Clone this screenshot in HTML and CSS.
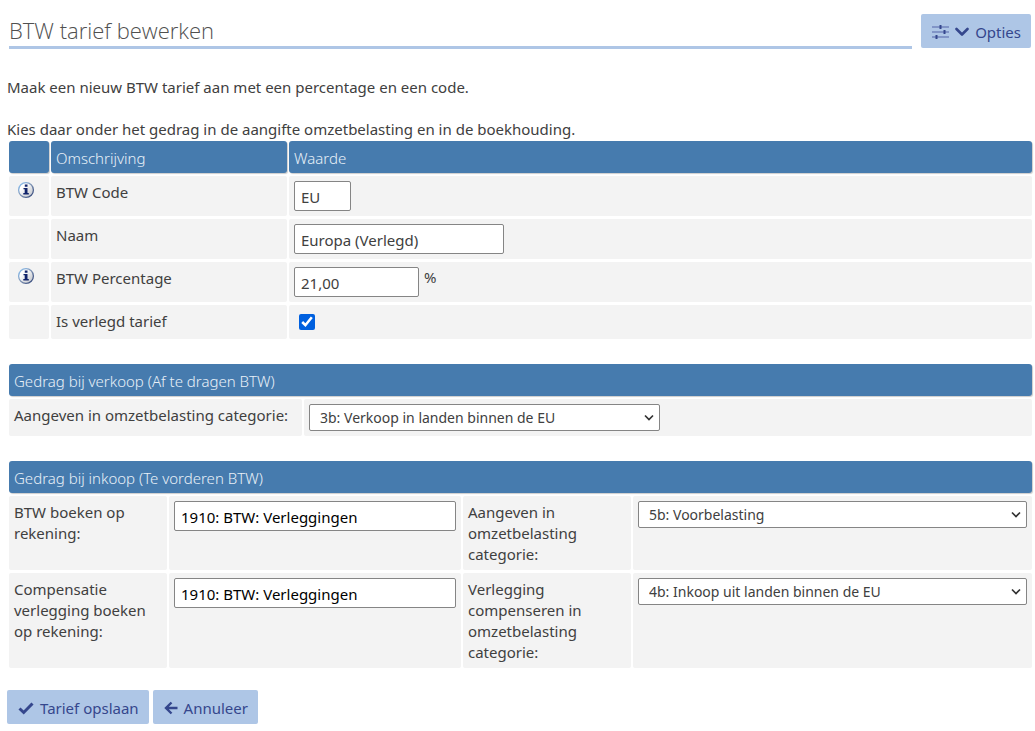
FILE: index.html
```html
<!DOCTYPE html>
<html lang="nl">
<head>
<meta charset="utf-8">
<meta name="viewport" content="width=device-width, initial-scale=1">
<title>BTW tarief bewerken</title>
<link rel="stylesheet" href="styles.css">
</head>
<body>
<header class="page-head">
  <h1 class="title">BTW tarief bewerken</h1>
  <button type="button" class="btn">
    <svg width="17" height="16" viewBox="0 0 17 16" aria-hidden="true">
      <path d="M0 3h17M0 8h17M0 13h17" stroke="#7385bd" stroke-width="1.600"/>
      <path d="M8.500 1v4M12.500 6v4M4.500 11v4" stroke="#35478d" stroke-width="2"/>
    </svg>
    <svg width="14" height="16" viewBox="0 0 14 16" aria-hidden="true">
      <path d="M1.500 5l5.500 5.500L12.500 5" fill="none" stroke="#35478d" stroke-width="2.600" stroke-linecap="round" stroke-linejoin="round"/>
    </svg>
    Opties
  </button>
</header>
<main>
  <p class="intro">Maak een nieuw BTW tarief aan met een percentage en een code.</p>
  <p class="intro">Kies daar onder het gedrag in de aangifte omzetbelasting en in de boekhouding.</p>
  <form>
    <table class="grid">
      <colgroup><col class="col-info"><col class="col-desc"><col></colgroup>
      <thead>
        <tr><th></th><th>Omschrijving</th><th>Waarde</th></tr>
      </thead>
      <tbody>
        <tr>
          <td class="info">
            <svg width="18" height="18" viewBox="0 0 18 18" role="img" aria-label="Info">
              <defs>
                <linearGradient id="rim" x1="0" y1="0" x2="1" y2="1"><stop offset="0" stop-color="#8cc4f5"/><stop offset=".5" stop-color="#8195b5"/><stop offset="1" stop-color="#263a70"/></linearGradient>
                <linearGradient id="face" x1="0" y1="0" x2="1" y2="1"><stop offset=".3" stop-color="#fff"/><stop offset="1" stop-color="#b9bdc4"/></linearGradient>
              </defs>
              <circle cx="9" cy="9" r="7.400" fill="url(#face)" stroke="url(#rim)" stroke-width="1.300"/>
              <path d="M7.800 3.500h2.700v2.200H7.800zM6.500 7h4v5h1.300v1.400H6.300V12h1.400V8.300H6.500z" fill="#12246b"/>
            </svg>
          </td>
          <td><label for="code">BTW Code</label></td>
          <td><input type="text" id="code" class="field w-code" value="EU"></td>
        </tr>
        <tr>
          <td></td>
          <td><label for="naam">Naam</label></td>
          <td><input type="text" id="naam" class="field w-name" value="Europa (Verlegd)"></td>
        </tr>
        <tr>
          <td class="info">
            <svg width="18" height="18" viewBox="0 0 18 18" role="img" aria-label="Info">
              <circle cx="9" cy="9" r="7.400" fill="url(#face)" stroke="url(#rim)" stroke-width="1.300"/>
              <path d="M7.800 3.500h2.700v2.200H7.800zM6.500 7h4v5h1.300v1.400H6.300V12h1.400V8.300H6.500z" fill="#12246b"/>
            </svg>
          </td>
          <td><label for="perc">BTW Percentage</label></td>
          <td><div class="with-unit"><input type="text" id="perc" class="field w-perc" value="21,00"><span>%</span></div></td>
        </tr>
        <tr>
          <td></td>
          <td><label for="verlegd">Is verlegd tarief</label></td>
          <td><input type="checkbox" id="verlegd" class="check" checked></td>
        </tr>
      </tbody>
    </table>

    <table class="grid">
      <colgroup><col class="col-sale"><col></colgroup>
      <thead><tr><th colspan="2">Gedrag bij verkoop (Af te dragen BTW)</th></tr></thead>
      <tbody>
        <tr>
          <td><label for="verkoop">Aangeven in omzetbelasting categorie:</label></td>
          <td><select id="verkoop" class="select w-sale"><option>3b: Verkoop in landen binnen de EU</option></select></td>
        </tr>
      </tbody>
    </table>

    <table class="grid">
      <colgroup><col class="col-label"><col class="col-account"><col class="col-label2"><col></colgroup>
      <thead><tr><th colspan="4">Gedrag bij inkoop (Te vorderen BTW)</th></tr></thead>
      <tbody>
        <tr>
          <td><label for="rek1">BTW boeken op rekening:</label></td>
          <td><input type="text" id="rek1" class="field account" value="1910: BTW: Verleggingen"></td>
          <td><label for="cat1">Aangeven in omzetbelasting categorie:</label></td>
          <td><select id="cat1" class="select"><option>5b: Voorbelasting</option></select></td>
        </tr>
        <tr>
          <td><label for="rek2">Compensatie verlegging boeken op rekening:</label></td>
          <td><input type="text" id="rek2" class="field account" value="1910: BTW: Verleggingen"></td>
          <td><label for="cat2">Verlegging compenseren in omzetbelasting categorie:</label></td>
          <td><select id="cat2" class="select"><option>4b: Inkoop uit landen binnen de EU</option></select></td>
        </tr>
      </tbody>
    </table>

    <div class="actions">
      <button type="button" class="btn">
        <svg width="16" height="16" viewBox="0 0 16 16" aria-hidden="true">
          <path d="M1.500 8.500l4.200 4L14.500 3.500" fill="none" stroke="#35478d" stroke-width="3"/>
        </svg>
        Tarief opslaan
      </button>
      <button type="button" class="btn">
        <svg width="14" height="16" viewBox="0 0 14 16" aria-hidden="true">
          <path d="M7.500 2.500L2 8l5.500 5.500M2 8h11.500" fill="none" stroke="#35478d" stroke-width="2.400"/>
        </svg>
        Annuleer
      </button>
    </div>
  </form>
</main>
</body>
</html>
```

FILE: styles.css
```css
* {
  box-sizing: border-box;
}

body {
  margin: 0;
  padding: 14px 1px 0 7px;
  background: #fff;
  color: #404040;
  font: 15px/21px "Noto Sans", "Open Sans", sans-serif;
}

.page-head {
  display: flex;
  align-items: flex-start;
  gap: 9px;
  padding: 0 3px 0 2px;
  margin-bottom: 28px;
}

.title {
  flex: 1;
  margin: 0;
  height: 35px;
  border-bottom: 3px solid #aec6e6;
  color: #505050;
  font-family: "Open Sans", "Noto Sans", sans-serif;
  font-size: 22px;
  font-weight: 300;
  line-height: 32px;
}

.btn {
  display: inline-flex;
  align-items: center;
  gap: 6px;
  height: 34px;
  padding: 2px 10px 0 11px;
  border: 0;
  border-radius: 2px;
  background: #aec6e6;
  color: #35478d;
  font: inherit;
  white-space: nowrap;
}

.intro {
  margin: 0 0 21px;
}

.intro + .intro {
  margin-bottom: -2px;
}

.grid {
  width: 100%;
  margin-bottom: 19px;
  border-collapse: separate;
  border-spacing: 2px 3px;
  table-layout: fixed;
}

.grid th {
  height: 32px;
  padding: 3px 5px 0;
  border-radius: 3px;
  background: #467bae;
  box-shadow: 1px 1px 1px #ccc;
  color: #e8f0f8;
  font-weight: 300;
  text-align: left;
}

.grid td {
  padding: 5px;
  border-radius: 2px;
  background: #f3f3f3;
  vertical-align: top;
}

.grid label {
  display: block;
  padding-top: 1px;
}

.info svg,
.field,
.select {
  display: block;
}

.info svg {
  margin-left: 3px;
}

.col-info { width: 40px; }
.col-desc { width: 236px; }
.col-sale { width: 293px; }
.col-label { width: 158px; }
.col-account { width: 292px; }
.col-label2 { width: 168px; }

.field {
  height: 30px;
  padding: 2px 6px 0;
  border: 1px solid #858585;
  border-radius: 2px;
  background: #fff;
  color: #404040;
  font: inherit;
}

.w-code { width: 57px; }
.w-name { width: 210px; }
.w-perc { width: 125px; }

.account {
  width: 100%;
  color: #000;
}

.with-unit {
  display: flex;
  gap: 5px;
}

.check {
  display: block;
  width: 16px;
  height: 16px;
  margin: 4px 5px;
  accent-color: #0060df;
}

.select {
  width: 100%;
  height: 27px;
  padding: 0 24px 0 10px;
  border: 1px solid #858585;
  border-radius: 2px;
  appearance: none;
  background: #fff url("data:image/svg+xml,%3Csvg xmlns='http://www.w3.org/2000/svg' width='10' height='8'%3E%3Cpath d='M1 1.500l4 4 4-4' fill='none' stroke='%23333' stroke-width='1.700'/%3E%3C/svg%3E") no-repeat right 5px center;
  color: #404040;
  font: inherit;
  font-size: 14px;
}

.w-sale { width: 351px; }

.actions {
  display: flex;
  gap: 4px;
}
```
